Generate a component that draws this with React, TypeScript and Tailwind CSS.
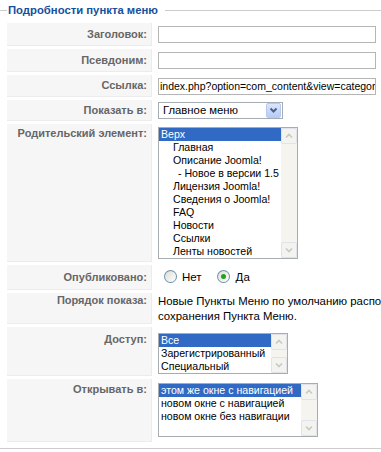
const font = "font-['Liberation_Sans',Arial,sans-serif]";

function ScrollBar() {
  return (
    <div className="w-[16px] bg-[#f5f4ef] flex flex-col justify-between">
      <div className="h-[16px] border border-[#e2e3ea] rounded-[2px] bg-[#f3f3ef] flex items-center justify-center">
        <svg width="8" height="6" viewBox="0 0 8 6">
          <path d="M1 4.5 L4 1.5 L7 4.5" fill="none" stroke="#c9c9c4" strokeWidth="1.6" />
        </svg>
      </div>
      <div className="h-[16px] border border-[#e2e3ea] rounded-[2px] bg-[#f3f3ef] flex items-center justify-center">
        <svg width="8" height="6" viewBox="0 0 8 6">
          <path d="M1 1.5 L4 4.5 L7 1.5" fill="none" stroke="#c9c9c4" strokeWidth="1.6" />
        </svg>
      </div>
    </div>
  );
}

function ListBox({ items, width, rows }: { items: { text: string; indent?: number }[]; width: string; rows: number }) {
  return (
    <div className={`${width} flex border border-[#a5acb2] bg-white`}>
      <div className="flex-1 flex flex-col" style={{ height: rows * 13 }}>
        {items.map((it, i) => (
          <div
            key={i}
            className={`h-[13px] leading-[13px] text-[10.6px] whitespace-nowrap overflow-hidden ${
              i === 0 ? "bg-[#316ac5] text-white" : "text-black"
            }`}
            style={{ paddingLeft: 2 + (it.indent ?? 0) }}
          >
            {it.text}
          </div>
        ))}
      </div>
      <ScrollBar />
    </div>
  );
}

function Row({ label, h, top, children, center = true }: { label: string; h: string; top?: string; children: React.ReactNode; center?: boolean }) {
  return (
    <div className={`flex ${h}`}>
      <div
        className={`w-[145px] shrink-0 bg-[#f6f6f6] border-b border-r border-[#ececec] flex justify-end pr-[4px] ${
          center ? "items-center" : `items-start ${top}`
        }`}
      >
        <span className="text-[11px] leading-[13px] font-bold text-[#666]">{label}</span>
      </div>
      <div className={`flex-1 pl-[6px] flex min-w-0 ${center ? "items-center" : `items-start ${top}`}`}>{children}</div>
    </div>
  );
}

function Radio({ checked }: { checked?: boolean }) {
  return (
    <span className="w-[13px] h-[13px] rounded-full border border-[#1c5180]/60 bg-gradient-to-br from-[#dcdcd6] to-white flex items-center justify-center mb-[3px]">
      {checked && <span className="w-[5px] h-[5px] rounded-full bg-[#21a121]" />}
    </span>
  );
}

export default function App() {
  return (
    <div className={`w-[381px] h-[452px] bg-white overflow-hidden ${font}`}>
      {/* legend */}
      <div className="flex items-center h-[20px]">
        <div className="w-[7px] h-px bg-[#cccccc]" />
        <span className="px-[1px] text-[11.3px] font-bold text-[#1450a0]">Подробности пункта меню</span>
        <div className="flex-1 h-px bg-[#cccccc] ml-[6px]" />
      </div>

      <div className="mt-[3px] pl-[7px] flex flex-col gap-[3px]">
        <Row label="Заголовок:" h="h-[23px]">
          <input className="w-[218px] h-[17px] border border-[#b5b5b5] outline-none" />
        </Row>
        <Row label="Псевдоним:" h="h-[23px]">
          <input className="w-[218px] h-[17px] border border-[#b5b5b5] outline-none" />
        </Row>
        <Row label="Ссылка:" h="h-[22px]">
          <div className="w-[218px] h-[17px] border border-[#b5b5b5] text-[10.5px] leading-[15px] pl-[1px] whitespace-nowrap overflow-hidden">
            index.php?option=com_content&amp;view=category
          </div>
        </Row>
        <Row label="Показать в:" h="h-[21px]">
          <div className="w-[125px] h-[17px] border border-[#a5acb2] flex items-center bg-white">
            <span className="flex-1 text-[11.3px] pl-[4px] leading-[15px]">Главное меню</span>
            <span className="w-[15px] h-[15px] mr-px rounded-[2px] border border-[#b8c9f0] bg-gradient-to-b from-[#dbe5fd] to-[#b6cbf7] flex items-center justify-center">
              <svg width="9" height="7" viewBox="0 0 9 7">
                <path d="M1.5 1.5 L4.5 4.5 L7.5 1.5" fill="none" stroke="#4d6185" strokeWidth="2" />
              </svg>
            </span>
          </div>
        </Row>
        <Row label="Родительский элемент:" h="h-[138px]" top="pt-[3px]" center={false}>
          <ListBox
            width="w-[140px]"
            rows={10}
            items={[
              { text: "Верх" },
              { text: "Главная", indent: 12 },
              { text: "Описание Joomla!", indent: 12 },
              { text: "- Новое в версии 1.5", indent: 17 },
              { text: "Лицензия Joomla!", indent: 12 },
              { text: "Сведения о Joomla!", indent: 12 },
              { text: "FAQ", indent: 12 },
              { text: "Новости", indent: 12 },
              { text: "Ссылки", indent: 12 },
              { text: "Ленты новостей", indent: 12 },
            ]}
          />
        </Row>
        <Row label="Опубликовано:" h="h-[25px]">
          <div className="flex items-center text-[11.5px] pl-[6px]">
            <Radio />
            <span className="ml-[5px]">Нет</span>
            <span className="ml-[15px]" />
            <Radio checked />
            <span className="ml-[6px]">Да</span>
          </div>
        </Row>
        <Row label="Порядок показа:" h="h-[31px]" top="pt-[1px]" center={false}>
          <div className="text-[11.4px] leading-[15px] whitespace-nowrap">
            Новые Пункты Меню по умолчанию располагаются в конце после
            <br />
            сохранения Пункта Меню.
          </div>
        </Row>
        <Row label="Доступ:" h="h-[49px]" top="pt-[6px]" center={false}>
          <ListBox
            width="w-[130px]"
            rows={3}
            items={[{ text: "Все" }, { text: "Зарегистрированный" }, { text: "Специальный" }]}
          />
        </Row>
        <Row label="Открывать в:" h="h-[63px]" top="pt-[4px]" center={false}>
          <ListBox
            width="w-[160px]"
            rows={4}
            items={[
              { text: "этом же окне с навигацией" },
              { text: "новом окне с навигацией" },
              { text: "новом окне без навигации" },
            ]}
          />
        </Row>
      </div>
      <div className="mt-[6px] h-px bg-[#cccccc]" />
    </div>
  );
}
